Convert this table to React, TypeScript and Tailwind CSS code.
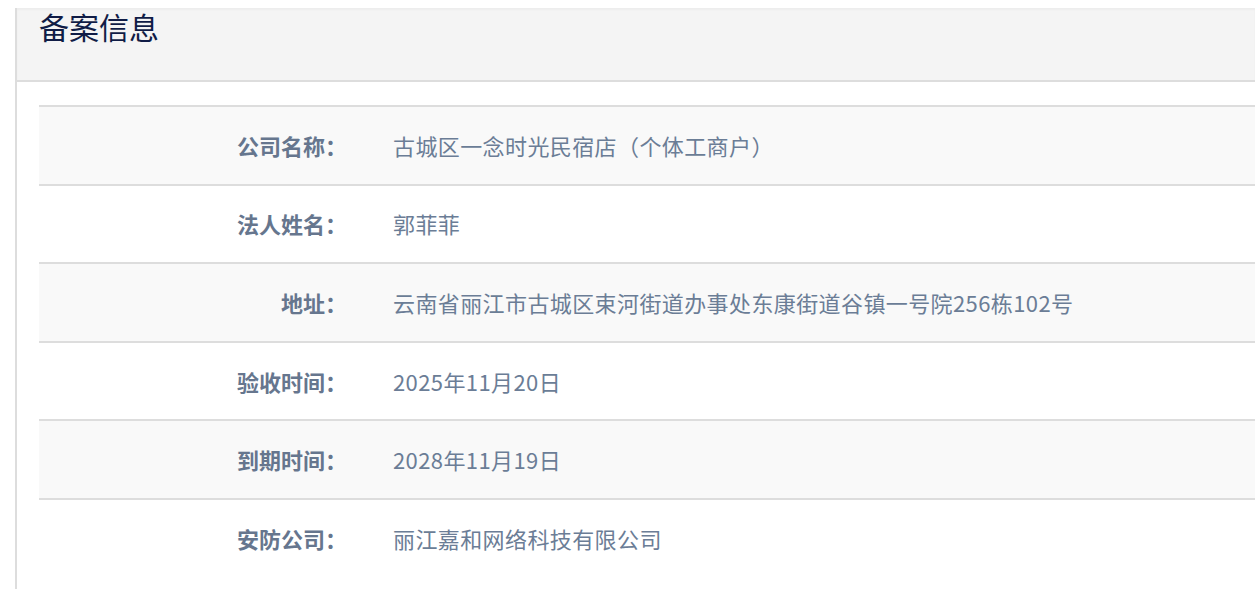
import * as React from 'react';

interface InfoRow {
  label: string;
  value: string;
}

const rows: InfoRow[] = [
  { label: '公司名称：', value: '古城区一念时光民宿店（个体工商户）' },
  { label: '法人姓名：', value: '郭菲菲' },
  { label: '地址：', value: '云南省丽江市古城区束河街道办事处东康街道谷镇一号院256栋102号' },
  { label: '验收时间：', value: '2025年11月20日' },
  { label: '到期时间：', value: '2028年11月19日' },
  { label: '安防公司：', value: '丽江嘉和网络科技有限公司' },
];

const App: React.FC = () => {
  return (
    <div
      className="h-[589px] overflow-hidden bg-white pl-[15px] pt-2"
      style={{ fontFamily: '"Microsoft YaHei", "Noto Sans CJK SC", "Noto Sans", sans-serif' }}
    >
      <div className="h-full border-l-2 border-[#dddddd]">
        <div className="h-[74px] border-b-2 border-[#dddddd] bg-[#f4f4f4] pl-[22px] pt-[3px] shadow-[inset_0_2px_2px_rgba(0,0,0,0.03)]">
          <h1 className="text-[30px] font-normal leading-none text-[#101c46]">备案信息</h1>
        </div>

        <div className="pl-[22px] pt-[23px]">
          {rows.map((row, idx) => (
            <div
              key={row.label}
              className={
                idx % 2 === 0
                  ? 'flex h-[78.6px] items-center border-t-2 border-[#dddddd] bg-[#f9f9f9]'
                  : 'flex h-[78.6px] items-center border-t-2 border-[#dddddd] bg-white'
              }
            >
              <span className="w-[308px] shrink-0 text-right text-[22px] font-bold text-[#66768e]">
                {row.label}
              </span>
              <span className="ml-[46px] text-[22px] tracking-[0.4px] text-[#6b7d96]">{row.value}</span>
            </div>
          ))}
        </div>
      </div>
    </div>
  );
};

export default App;
